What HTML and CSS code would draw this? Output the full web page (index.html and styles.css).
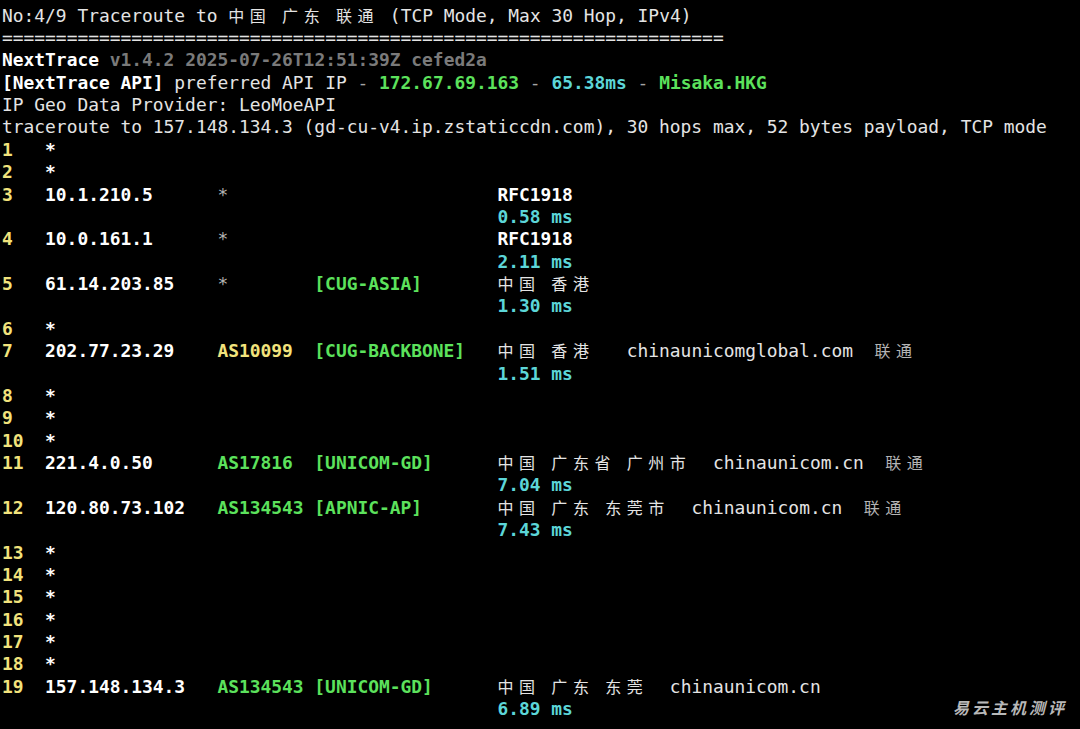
FILE: index.html
```
<!DOCTYPE html>
<html lang="zh-CN">
<head>
    <meta charset="UTF-8">
    <meta name="viewport" content="width=device-width, initial-scale=1.0">
    <title>NextTrace - 广东联通</title>
    <link rel="stylesheet" href="styles.css">
</head>
<body>
    <div class="term">
        <div class="line">No:4/9 Traceroute to <span class="cjk">中国</span> <span class="cjk">广东</span> <span class="cjk">联通</span> (TCP Mode, Max 30 Hop, IPv4)</div>
        <div class="line">===================================================================</div>
        <div class="line"><span class="b">NextTrace</span> <span class="dim">v1.4.2 2025-07-26T12:51:39Z cefed2a</span></div>
        <div class="line"><span class="b">[NextTrace API]</span> preferred API IP <span class="sep">-</span> <span class="g">172.67.69.163</span> <span class="sep">-</span> <span class="c">65.38ms</span> <span class="sep">-</span> <span class="g">Misaka.HKG</span></div>
        <div class="line">IP Geo Data Provider: LeoMoeAPI</div>
        <div class="line">traceroute to 157.148.134.3 (gd-cu-v4.ip.zstaticcdn.com), 30 hops max, 52 bytes payload, TCP mode</div>

        <div class="hop"><span class="num">1</span><span class="b">*</span></div>
        <div class="hop"><span class="num">2</span><span class="b">*</span></div>
        <div class="hop">
            <span class="num">3</span><span class="b">10.1.210.5</span><span class="gray">*</span><span></span>
            <div class="geo"><span class="b">RFC1918</span><span class="c">0.58 ms</span></div>
        </div>
        <div class="hop">
            <span class="num">4</span><span class="b">10.0.161.1</span><span class="gray">*</span><span></span>
            <div class="geo"><span class="b">RFC1918</span><span class="c">2.11 ms</span></div>
        </div>
        <div class="hop">
            <span class="num">5</span><span class="b">61.14.203.85</span><span class="gray">*</span><span class="g">[CUG-ASIA]</span>
            <div class="geo"><span><span class="cjk">中国</span> <span class="cjk">香港</span></span><span class="c">1.30 ms</span></div>
        </div>
        <div class="hop"><span class="num">6</span><span class="b">*</span></div>
        <div class="hop">
            <span class="num">7</span><span class="b">202.77.23.29</span><span class="y">AS10099</span><span class="g">[CUG-BACKBONE]</span>
            <div class="geo"><span><span class="cjk">中国</span> <span class="cjk">香港</span>   chinaunicomglobal.com  <span class="cjk gray">联通</span></span><span class="c">1.51 ms</span></div>
        </div>
        <div class="hop"><span class="num">8</span><span class="b">*</span></div>
        <div class="hop"><span class="num">9</span><span class="b">*</span></div>
        <div class="hop"><span class="num">10</span><span class="b">*</span></div>
        <div class="hop">
            <span class="num">11</span><span class="b">221.4.0.50</span><span class="g">AS17816</span><span class="g">[UNICOM-GD]</span>
            <div class="geo"><span><span class="cjk">中国</span> <span class="cjk">广东省</span> <span class="cjk">广州市</span>  chinaunicom.cn  <span class="cjk gray">联通</span></span><span class="c">7.04 ms</span></div>
        </div>
        <div class="hop">
            <span class="num">12</span><span class="b">120.80.73.102</span><span class="g">AS134543</span><span class="g">[APNIC-AP]</span>
            <div class="geo"><span><span class="cjk">中国</span> <span class="cjk">广东</span> <span class="cjk">东莞市</span>  chinaunicom.cn  <span class="cjk gray">联通</span></span><span class="c">7.43 ms</span></div>
        </div>
        <div class="hop"><span class="num">13</span><span class="b">*</span></div>
        <div class="hop"><span class="num">14</span><span class="b">*</span></div>
        <div class="hop"><span class="num">15</span><span class="b">*</span></div>
        <div class="hop"><span class="num">16</span><span class="b">*</span></div>
        <div class="hop"><span class="num">17</span><span class="b">*</span></div>
        <div class="hop"><span class="num">18</span><span class="b">*</span></div>
        <div class="hop">
            <span class="num">19</span><span class="b">157.148.134.3</span><span class="g">AS134543</span><span class="g">[UNICOM-GD]</span>
            <div class="geo"><span><span class="cjk">中国</span> <span class="cjk">广东</span> <span class="cjk">东莞</span>  chinaunicom.cn</span><span class="c">6.89 ms</span></div>
        </div>
    </div>

    <div class="watermark">易云主机测评</div>
</body>
</html>
```

FILE: styles.css
```
html, body {
    margin: 0;
    background: #000;
}
body {
    width: 1080px;
    height: 729px;
    overflow: hidden;
    position: relative;
}
.term {
    font-family: "DejaVu Sans Mono", "Noto Sans CJK SC", monospace;
    font-size: 17.9px;
    line-height: 22.375px;
    color: #e4e4e4;
    padding: 4.5px 0 0 2px;
}
.line,
.hop span {
    white-space: pre;
}
.hop {
    display: grid;
    grid-template-columns: 4ch 16ch 9ch 17ch 1fr;
}
.geo {
    display: flex;
    flex-direction: column;
}
/* CJK glyphs take two terminal cells each */
.cjk {
    font-size: 16px;
    line-height: 16px;
    letter-spacing: 5.55px;
}
.b {
    font-weight: bold;
    color: #fff;
}
.dim {
    font-weight: bold;
    color: #7a7a7a;
}
.sep {
    color: #a4a4a4;
}
.num {
    font-weight: bold;
    color: #f2e37c;
}
.y {
    font-weight: bold;
    color: #f2e37c;
}
.g {
    font-weight: bold;
    color: #5ce25c;
}
.c {
    font-weight: bold;
    color: #5cd6d8;
}
.gray {
    color: #b4b4b4;
}
.watermark {
    position: absolute;
    right: 13px;
    bottom: 10px;
    font-family: "Noto Sans CJK SC", sans-serif;
    font-size: 16px;
    font-weight: bold;
    font-style: italic;
    letter-spacing: 3px;
    color: #b8b8b8;
}
```
